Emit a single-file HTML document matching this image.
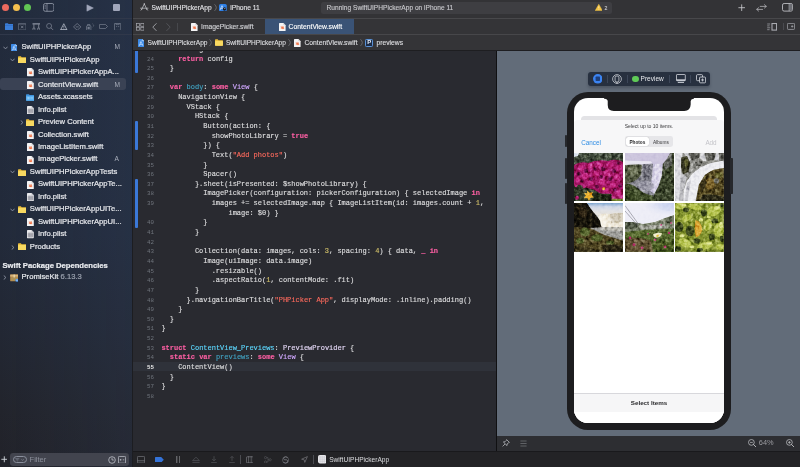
<!DOCTYPE html>
<html><head><meta charset="utf-8"><title>Xcode</title>
<style>
*{box-sizing:border-box;margin:0;padding:0}
html,body{width:800px;height:467px;overflow:hidden;background:#292a30}
body{position:relative;font-family:"Liberation Sans",sans-serif;color:#dfdfe0;-webkit-font-smoothing:antialiased}
.abs{position:absolute}
#root{position:absolute;left:0;top:0;width:800px;height:467px;will-change:transform;overflow:hidden}
#sidebar{position:absolute;left:0;top:0;width:132.4px;height:467px;background:linear-gradient(270deg,rgba(70,100,150,0.11),rgba(70,100,150,0) 100%),linear-gradient(180deg,#222b3c 0%,#222a3a 50%,#222733 72%,#22242c 88%,#212229 100%)}
#sideline{position:absolute;left:132.4px;top:0;width:0.9px;height:467px;background:#1c1d21}
#sidebar .hline{position:absolute;left:0;width:133px;height:1px;background:#30384a}
.tl{position:absolute;top:4px;width:7.2px;height:7.2px;border-radius:50%}
.item{position:absolute;left:0;width:133px;height:12.5px;line-height:12.5px;font-size:7.65px;color:#e4e6ea;white-space:nowrap}
.item .tx{position:absolute;top:0;-webkit-text-stroke:0.22px currentColor}
.item .bd{position:absolute;left:114.5px;top:0;font-size:6.6px;color:#a9aebb}
.item svg{position:absolute}
#sel{position:absolute;left:0;top:78.4px;width:126px;height:12px;border-radius:3px;background:#3a4254}
/* editor chrome */
#toolbar{position:absolute;left:133px;top:0;width:667px;height:18.2px;background:#333336}
#tabbar{position:absolute;left:133px;top:18.2px;width:667px;height:16px;background:#343437;border-top:0.8px solid #48484b}
#jump{z-index:2;position:absolute;left:133px;top:34px;width:667px;height:17.1px;background:#343437;border-top:0.8px solid #47474a;border-bottom:0.7px solid #1e1e21}
#editor{position:absolute;left:133px;top:50px;width:363px;height:401px;background:#292a30;overflow:hidden}
.row{position:relative;height:9.645px;line-height:9.645px;white-space:pre;font-family:"Liberation Mono",monospace;font-size:7px;color:#dfdfe0}
.row.hl{background:none}
#curline{position:absolute;left:0;top:311.9px;width:364px;height:8.9px;background:#2f323a}
.ln{position:absolute;left:0;width:21px;text-align:right;font-size:5.8px;color:#6f747c}
.ln.cur{color:#e6e6e6;font-weight:bold}
.cd{position:absolute;left:28.4px;letter-spacing:-0.01px;-webkit-text-stroke:0.14px currentColor}
.k{color:#fc5fa3;font-weight:bold}
.t{color:#d0a8ff}
.t2{color:#e2d6f4}
.s{color:#fc6a5d}
.n{color:#d0bf69}
.d{color:#41a1c0}
.c{color:#5dd8ff}
.chg{position:absolute;left:2px;width:3px;background:#3b78d8;border-radius:1px}
#canvas{position:absolute;left:497px;top:51px;width:303px;height:385px;background:#626c79}
#cbar{position:absolute;left:497px;top:435.6px;width:303px;height:15.4px;background:#2d2e32}
#dbg{position:absolute;left:133px;top:451px;width:667px;height:16px;background:#232326;border-top:1px solid #19191c}
#split{position:absolute;left:496px;top:50px;width:0.9px;height:401px;background:#101012}
</style></head><body>
<svg width="0" height="0" style="position:absolute"><defs><filter id="pb0" x="0" y="0" width="100%" height="100%"><feGaussianBlur stdDeviation="0.5"/></filter><filter id="pb" x="0" y="0" width="100%" height="100%" color-interpolation-filters="sRGB"><feGaussianBlur in="SourceGraphic" stdDeviation="0.55" result="b"/><feTurbulence type="fractalNoise" baseFrequency="0.32" numOctaves="2" seed="7" result="n"/><feColorMatrix in="n" type="matrix" values="0.5 0.5 0 0 0  0.5 0.5 0 0 0  0.5 0.5 0 0 0  0 0 0 0 1" result="g"/><feComponentTransfer in="g" result="g2"><feFuncR type="linear" slope="2.2" intercept="-0.6"/><feFuncG type="linear" slope="2.2" intercept="-0.6"/><feFuncB type="linear" slope="2.2" intercept="-0.6"/></feComponentTransfer><feBlend in="g2" in2="b" mode="soft-light"/></filter></defs></svg>

<div id="root">
<!-- ================= SIDEBAR ================= -->
<div id="sidebar">
  <div class="tl" style="left:1.8px;background:#ec6a5e"></div>
  <div class="tl" style="left:13px;background:#f4bf4f"></div>
  <div class="tl" style="left:24.3px;background:#61c554"></div>
  <svg class="abs" style="left:42.8px;top:3.3px" width="11.4" height="8.8" viewBox="0 0 11.4 8.8"><rect x="0.5" y="0.5" width="10.4" height="7.8" rx="1.8" fill="none" stroke="#9299a9" stroke-width="0.85"/><path d="M4 0.5 V8.3" stroke="#9299a9" stroke-width="0.75"/><path d="M1.5 2.4 H3 M1.5 3.8 H3 M1.5 5.2 H3" stroke="#9299a9" stroke-width="0.55"/></svg>
<svg class="abs" style="left:86px;top:3.6px" width="8.4" height="8" viewBox="0 0 8.4 8"><path d="M0.9 0.8 L7.4 4 L0.9 7.2 Z" fill="#a0a6ba" stroke="#a0a6ba" stroke-width="0.5" stroke-linejoin="round"/></svg>
<div class="abs" style="left:113.2px;top:4.2px;width:6.9px;height:6.9px;border-radius:1px;background:#a0a6ba"></div>
  <div class="hline" style="top:18px"></div>
  <svg class="abs" style="left:4.6px;top:22.8px" width="8.4" height="7.4" viewBox="0 0 8.4 7.4"><path d="M0 1 Q0 0.2 0.8 0.2 L2.8 0.2 L3.6 1 L7.6 1 Q8.4 1 8.4 1.8 L8.4 6.4 Q8.4 7.2 7.6 7.2 L0.8 7.2 Q0 7.2 0 6.4 Z" fill="#3b7fd9"/><path d="M0 2.4 H8.4" stroke="#2b62b4" stroke-width="0.5"/></svg>
<svg class="abs" style="left:18px;top:22.8px" width="8.4" height="7.4" viewBox="0 0 8.4 7.4"><rect x="0.4" y="0.4" width="7.6" height="6.6" rx="0.6" fill="none" stroke="#6f7787" stroke-width="0.7"/><path d="M0.4 1.4 H8" stroke="#6f7787" stroke-width="0.5"/><path d="M3 2.8 L5.4 5.2 M5.4 2.8 L3 5.2" stroke="#8a91a0" stroke-width="0.7"/></svg>
<svg class="abs" style="left:31.6px;top:22.8px" width="8.6" height="7.6" viewBox="0 0 8.6 7.6"><g fill="none" stroke="#9da4b2" stroke-width="0.7"><path d="M0.5 0.9 H8.1" stroke-width="1.1"/><path d="M1.9 1.4 V5 M6.7 1.4 V5"/><path d="M0.9 5.2 V6.9 M2.9 5.2 V6.9 M5.7 5.2 V6.9 M7.7 5.2 V6.9 M0.9 5.2 H2.9 M5.7 5.2 H7.7" stroke-width="0.6"/></g></svg>
<svg class="abs" style="left:45.8px;top:22.8px" width="8" height="7.6" viewBox="0 0 8 7.6"><circle cx="3.1" cy="3" r="2.5" fill="none" stroke="#7f8797" stroke-width="0.7"/><path d="M5 4.9 L7.4 7.2" stroke="#7f8797" stroke-width="0.8" stroke-linecap="round"/></svg>
<svg class="abs" style="left:59.6px;top:22.5px" width="8" height="7.6" viewBox="0 0 8 7.6"><path d="M3.8 0.7 L7 6.9 L0.6 6.9 Z" fill="none" stroke="#b4bac6" stroke-width="0.8" stroke-linejoin="round"/><path d="M0.6 6.9 H7" stroke="#b4bac6" stroke-width="1"/><path d="M3.8 2.8 V4.6 M3.8 5.3 V5.8" stroke="#b4bac6" stroke-width="0.75"/></svg>
<svg class="abs" style="left:73px;top:22.6px" width="8.4" height="7.8" viewBox="0 0 8.4 7.8"><path d="M4.2 0.5 L7.9 3.9 L4.2 7.3 L0.5 3.9 Z" fill="none" stroke="#7f8797" stroke-width="0.7" stroke-linejoin="round"/><path d="M2.7 3.9 H5.7" stroke="#7f8797" stroke-width="0.7"/></svg>
<svg class="abs" style="left:86px;top:22.6px" width="9.4" height="7.8" viewBox="0 0 9.4 7.8"><g fill="none" stroke="#7f8797" stroke-width="0.65"><rect x="0.5" y="2.8" width="4.4" height="4.5" rx="0.6"/><path d="M1.5 2.8 V1.5 H3.9 V2.8"/><rect x="1.9" y="4.4" width="1.6" height="1.5"/><path d="M6.6 0.8 Q8.6 2.4 6.8 4.2" stroke-dasharray="0.9 0.7"/></g></svg>
<svg class="abs" style="left:99.2px;top:24.0px" width="9" height="5" viewBox="0 0 9 5"><path d="M0.4 0.9 Q0.4 0.4 0.9 0.4 L6.4 0.4 L8.5 2.5 L6.4 4.6 L0.9 4.6 Q0.4 4.6 0.4 4.1 Z" fill="none" stroke="#7f8797" stroke-width="0.7" stroke-linejoin="round"/></svg>
<svg class="abs" style="left:114px;top:22.6px" width="7.2" height="7.8" viewBox="0 0 7.2 7.8"><rect x="0.4" y="0.4" width="6.4" height="7" rx="0.6" fill="none" stroke="#7f8797" stroke-width="0.7"/><path d="M2 0.4 V1.6 H5.2 V0.4 M2 3.6 H3.2 M4 3.6 H5.2" fill="none" stroke="#7f8797" stroke-width="0.6"/></svg>
  <div class="hline" style="top:34px"></div>
  <div id="sel"></div>
  <div class="item" style="top:41.25px"><svg style="left:3px;top:4.25px" width="5" height="4" viewBox="0 0 5 4"><path d="M0.7 1 L2.5 2.9 L4.3 1" fill="none" stroke="#8f96a5" stroke-width="0.9" stroke-linecap="round" stroke-linejoin="round"/></svg><svg style="left:10.8px;top:2.6px" width="6.6" height="7.6" viewBox="0 0 6.6 7.6"><path d="M0.6 0 L4.4 0 L6.6 2.2 L6.6 7 Q6.6 7.6 6 7.6 L0.6 7.6 Q0 7.6 0 7 L0 0.6 Q0 0 0.6 0 Z" fill="#3d8ae6"/><path d="M4.4 0 L4.4 1.7 Q4.4 2.2 4.9 2.2 L6.6 2.2 Z" fill="#b5d6fa"/><path d="M1.4 6.2 L3.2 2.6 L5 6.2 M2 5.2 H4.5 M3.3 1.6 L2.2 3.6" fill="none" stroke="#d7e8fb" stroke-width="0.6" stroke-linecap="round"/></svg><span class="tx" style="left:21.5px">SwiftUIPHPickerApp</span><span class="bd">M</span></div>
<div class="item" style="top:53.72px"><svg style="left:10.2px;top:4.25px" width="5" height="4" viewBox="0 0 5 4"><path d="M0.7 1 L2.5 2.9 L4.3 1" fill="none" stroke="#8f96a5" stroke-width="0.9" stroke-linecap="round" stroke-linejoin="round"/></svg><svg style="left:18px;top:2.6px" width="8.4" height="7.2" viewBox="0 0 8.4 7.2"><path d="M0 1 Q0 0.3 0.7 0.3 L2.8 0.3 L3.7 1.2 L7.7 1.2 Q8.4 1.2 8.4 1.9 L8.4 6.4 Q8.4 7.1 7.7 7.1 L0.7 7.1 Q0 7.1 0 6.4 Z" fill="#e9bd3c"/><path d="M0 2.6 Q0 2 0.7 2 L7.7 2 Q8.4 2 8.4 2.6 L8.4 6.4 Q8.4 7.1 7.7 7.1 L0.7 7.1 Q0 7.1 0 6.4 Z" fill="#f8d961"/></svg><span class="tx" style="left:29.8px">SwiftUIPHPickerApp</span></div>
<div class="item" style="top:66.19px"><svg style="left:26.9px;top:2.2px" width="6.8" height="8.2" viewBox="0 0 6.8 8.2"><path d="M0.6 0 L4.6 0 L6.8 2.2 L6.8 7.6 Q6.8 8.2 6.2 8.2 L0.6 8.2 Q0 8.2 0 7.6 L0 0.6 Q0 0 0.6 0 Z" fill="#f4f4f5"/><path d="M4.6 0 L4.6 1.7 Q4.6 2.2 5.1 2.2 L6.8 2.2 Z" fill="#c9c9cd"/><path d="M1.5 3.3 Q2.8 4.4 3.9 4.6 Q4.3 3.6 3.8 2.7 Q5.5 3.8 5.2 5.5 Q5.6 6.1 5.5 6.7 Q5 6.2 4.5 6.3 Q3.2 6.9 1.3 5.6 Q2.2 5.7 2.8 5.4 Q1.9 4.6 1.5 3.3 Z" fill="#f06a3c" stroke="#f06a3c" stroke-width="0.4" stroke-linejoin="round" transform="translate(3.4 4.7) scale(0.78) translate(-3.4 -4.9)"/></svg><span class="tx" style="left:37.9px">SwiftUIPHPickerAppA...</span></div>
<div class="item" style="top:78.66px"><svg style="left:26.9px;top:2.2px" width="6.8" height="8.2" viewBox="0 0 6.8 8.2"><path d="M0.6 0 L4.6 0 L6.8 2.2 L6.8 7.6 Q6.8 8.2 6.2 8.2 L0.6 8.2 Q0 8.2 0 7.6 L0 0.6 Q0 0 0.6 0 Z" fill="#f4f4f5"/><path d="M4.6 0 L4.6 1.7 Q4.6 2.2 5.1 2.2 L6.8 2.2 Z" fill="#c9c9cd"/><path d="M1.5 3.3 Q2.8 4.4 3.9 4.6 Q4.3 3.6 3.8 2.7 Q5.5 3.8 5.2 5.5 Q5.6 6.1 5.5 6.7 Q5 6.2 4.5 6.3 Q3.2 6.9 1.3 5.6 Q2.2 5.7 2.8 5.4 Q1.9 4.6 1.5 3.3 Z" fill="#f06a3c" stroke="#f06a3c" stroke-width="0.4" stroke-linejoin="round" transform="translate(3.4 4.7) scale(0.78) translate(-3.4 -4.9)"/></svg><span class="tx" style="left:37.9px">ContentView.swift</span><span class="bd">M</span></div>
<div class="item" style="top:91.13px"><svg style="left:25.9px;top:3px" width="8.4" height="6.8" viewBox="0 0 8.4 6.8"><path d="M0 0.9 Q0 0.2 0.7 0.2 L2.8 0.2 L3.7 1.1 L7.7 1.1 Q8.4 1.1 8.4 1.8 L8.4 6 Q8.4 6.7 7.7 6.7 L0.7 6.7 Q0 6.7 0 6 Z" fill="#3f93dc"/><path d="M0 2.4 Q0 1.9 0.7 1.9 L7.7 1.9 Q8.4 1.9 8.4 2.4 L8.4 6 Q8.4 6.7 7.7 6.7 L0.7 6.7 Q0 6.7 0 6 Z" fill="#58aef0"/><rect x="1.4" y="3" width="2.2" height="2.4" fill="#8fcbf6"/><rect x="4.3" y="3.2" width="2.8" height="0.6" fill="#8fcbf6"/><rect x="4.3" y="4.5" width="2.8" height="0.6" fill="#8fcbf6"/></svg><span class="tx" style="left:37.9px">Assets.xcassets</span></div>
<div class="item" style="top:103.60px"><svg style="left:26.9px;top:2.2px" width="6.8" height="8.2" viewBox="0 0 6.8 8.2"><path d="M0.6 0 L4.6 0 L6.8 2.2 L6.8 7.6 Q6.8 8.2 6.2 8.2 L0.6 8.2 Q0 8.2 0 7.6 L0 0.6 Q0 0 0.6 0 Z" fill="#e9e9ec"/><path d="M4.6 0 L4.6 1.7 Q4.6 2.2 5.1 2.2 L6.8 2.2 Z" fill="#b9b9bf"/><path d="M1.2 3.1H5.6V7H1.2Z M2.7 3.1V7 M4.1 3.1V7 M1.2 4.4H5.6 M1.2 5.7H5.6" fill="none" stroke="#85858e" stroke-width="0.6"/></svg><span class="tx" style="left:37.9px">Info.plist</span></div>
<div class="item" style="top:116.07px"><svg style="left:20.1px;top:3.75px" width="4" height="5" viewBox="0 0 4 5"><path d="M1 0.7 L2.9 2.5 L1 4.3" fill="none" stroke="#8f96a5" stroke-width="0.9" stroke-linecap="round" stroke-linejoin="round"/></svg><svg style="left:26.0px;top:2.6px" width="8.4" height="7.2" viewBox="0 0 8.4 7.2"><path d="M0 1 Q0 0.3 0.7 0.3 L2.8 0.3 L3.7 1.2 L7.7 1.2 Q8.4 1.2 8.4 1.9 L8.4 6.4 Q8.4 7.1 7.7 7.1 L0.7 7.1 Q0 7.1 0 6.4 Z" fill="#e9bd3c"/><path d="M0 2.6 Q0 2 0.7 2 L7.7 2 Q8.4 2 8.4 2.6 L8.4 6.4 Q8.4 7.1 7.7 7.1 L0.7 7.1 Q0 7.1 0 6.4 Z" fill="#f8d961"/></svg><span class="tx" style="left:37.9px">Preview Content</span></div>
<div class="item" style="top:128.54px"><svg style="left:26.9px;top:2.2px" width="6.8" height="8.2" viewBox="0 0 6.8 8.2"><path d="M0.6 0 L4.6 0 L6.8 2.2 L6.8 7.6 Q6.8 8.2 6.2 8.2 L0.6 8.2 Q0 8.2 0 7.6 L0 0.6 Q0 0 0.6 0 Z" fill="#f4f4f5"/><path d="M4.6 0 L4.6 1.7 Q4.6 2.2 5.1 2.2 L6.8 2.2 Z" fill="#c9c9cd"/><path d="M1.5 3.3 Q2.8 4.4 3.9 4.6 Q4.3 3.6 3.8 2.7 Q5.5 3.8 5.2 5.5 Q5.6 6.1 5.5 6.7 Q5 6.2 4.5 6.3 Q3.2 6.9 1.3 5.6 Q2.2 5.7 2.8 5.4 Q1.9 4.6 1.5 3.3 Z" fill="#f06a3c" stroke="#f06a3c" stroke-width="0.4" stroke-linejoin="round" transform="translate(3.4 4.7) scale(0.78) translate(-3.4 -4.9)"/></svg><span class="tx" style="left:37.9px">Collection.swift</span></div>
<div class="item" style="top:141.01px"><svg style="left:26.9px;top:2.2px" width="6.8" height="8.2" viewBox="0 0 6.8 8.2"><path d="M0.6 0 L4.6 0 L6.8 2.2 L6.8 7.6 Q6.8 8.2 6.2 8.2 L0.6 8.2 Q0 8.2 0 7.6 L0 0.6 Q0 0 0.6 0 Z" fill="#f4f4f5"/><path d="M4.6 0 L4.6 1.7 Q4.6 2.2 5.1 2.2 L6.8 2.2 Z" fill="#c9c9cd"/><path d="M1.5 3.3 Q2.8 4.4 3.9 4.6 Q4.3 3.6 3.8 2.7 Q5.5 3.8 5.2 5.5 Q5.6 6.1 5.5 6.7 Q5 6.2 4.5 6.3 Q3.2 6.9 1.3 5.6 Q2.2 5.7 2.8 5.4 Q1.9 4.6 1.5 3.3 Z" fill="#f06a3c" stroke="#f06a3c" stroke-width="0.4" stroke-linejoin="round" transform="translate(3.4 4.7) scale(0.78) translate(-3.4 -4.9)"/></svg><span class="tx" style="left:37.9px">ImageListItem.swift</span></div>
<div class="item" style="top:153.48px"><svg style="left:26.9px;top:2.2px" width="6.8" height="8.2" viewBox="0 0 6.8 8.2"><path d="M0.6 0 L4.6 0 L6.8 2.2 L6.8 7.6 Q6.8 8.2 6.2 8.2 L0.6 8.2 Q0 8.2 0 7.6 L0 0.6 Q0 0 0.6 0 Z" fill="#f4f4f5"/><path d="M4.6 0 L4.6 1.7 Q4.6 2.2 5.1 2.2 L6.8 2.2 Z" fill="#c9c9cd"/><path d="M1.5 3.3 Q2.8 4.4 3.9 4.6 Q4.3 3.6 3.8 2.7 Q5.5 3.8 5.2 5.5 Q5.6 6.1 5.5 6.7 Q5 6.2 4.5 6.3 Q3.2 6.9 1.3 5.6 Q2.2 5.7 2.8 5.4 Q1.9 4.6 1.5 3.3 Z" fill="#f06a3c" stroke="#f06a3c" stroke-width="0.4" stroke-linejoin="round" transform="translate(3.4 4.7) scale(0.78) translate(-3.4 -4.9)"/></svg><span class="tx" style="left:37.9px">ImagePicker.swift</span><span class="bd">A</span></div>
<div class="item" style="top:165.95px"><svg style="left:10.2px;top:4.25px" width="5" height="4" viewBox="0 0 5 4"><path d="M0.7 1 L2.5 2.9 L4.3 1" fill="none" stroke="#8f96a5" stroke-width="0.9" stroke-linecap="round" stroke-linejoin="round"/></svg><svg style="left:18px;top:2.6px" width="8.4" height="7.2" viewBox="0 0 8.4 7.2"><path d="M0 1 Q0 0.3 0.7 0.3 L2.8 0.3 L3.7 1.2 L7.7 1.2 Q8.4 1.2 8.4 1.9 L8.4 6.4 Q8.4 7.1 7.7 7.1 L0.7 7.1 Q0 7.1 0 6.4 Z" fill="#e9bd3c"/><path d="M0 2.6 Q0 2 0.7 2 L7.7 2 Q8.4 2 8.4 2.6 L8.4 6.4 Q8.4 7.1 7.7 7.1 L0.7 7.1 Q0 7.1 0 6.4 Z" fill="#f8d961"/></svg><span class="tx" style="left:29.8px">SwiftUIPHPickerAppTests</span></div>
<div class="item" style="top:178.42px"><svg style="left:26.9px;top:2.2px" width="6.8" height="8.2" viewBox="0 0 6.8 8.2"><path d="M0.6 0 L4.6 0 L6.8 2.2 L6.8 7.6 Q6.8 8.2 6.2 8.2 L0.6 8.2 Q0 8.2 0 7.6 L0 0.6 Q0 0 0.6 0 Z" fill="#f4f4f5"/><path d="M4.6 0 L4.6 1.7 Q4.6 2.2 5.1 2.2 L6.8 2.2 Z" fill="#c9c9cd"/><path d="M1.5 3.3 Q2.8 4.4 3.9 4.6 Q4.3 3.6 3.8 2.7 Q5.5 3.8 5.2 5.5 Q5.6 6.1 5.5 6.7 Q5 6.2 4.5 6.3 Q3.2 6.9 1.3 5.6 Q2.2 5.7 2.8 5.4 Q1.9 4.6 1.5 3.3 Z" fill="#f06a3c" stroke="#f06a3c" stroke-width="0.4" stroke-linejoin="round" transform="translate(3.4 4.7) scale(0.78) translate(-3.4 -4.9)"/></svg><span class="tx" style="left:37.9px">SwiftUIPHPickerAppTe...</span></div>
<div class="item" style="top:190.89px"><svg style="left:26.9px;top:2.2px" width="6.8" height="8.2" viewBox="0 0 6.8 8.2"><path d="M0.6 0 L4.6 0 L6.8 2.2 L6.8 7.6 Q6.8 8.2 6.2 8.2 L0.6 8.2 Q0 8.2 0 7.6 L0 0.6 Q0 0 0.6 0 Z" fill="#e9e9ec"/><path d="M4.6 0 L4.6 1.7 Q4.6 2.2 5.1 2.2 L6.8 2.2 Z" fill="#b9b9bf"/><path d="M1.2 3.1H5.6V7H1.2Z M2.7 3.1V7 M4.1 3.1V7 M1.2 4.4H5.6 M1.2 5.7H5.6" fill="none" stroke="#85858e" stroke-width="0.6"/></svg><span class="tx" style="left:37.9px">Info.plist</span></div>
<div class="item" style="top:203.36px"><svg style="left:10.2px;top:4.25px" width="5" height="4" viewBox="0 0 5 4"><path d="M0.7 1 L2.5 2.9 L4.3 1" fill="none" stroke="#8f96a5" stroke-width="0.9" stroke-linecap="round" stroke-linejoin="round"/></svg><svg style="left:18px;top:2.6px" width="8.4" height="7.2" viewBox="0 0 8.4 7.2"><path d="M0 1 Q0 0.3 0.7 0.3 L2.8 0.3 L3.7 1.2 L7.7 1.2 Q8.4 1.2 8.4 1.9 L8.4 6.4 Q8.4 7.1 7.7 7.1 L0.7 7.1 Q0 7.1 0 6.4 Z" fill="#e9bd3c"/><path d="M0 2.6 Q0 2 0.7 2 L7.7 2 Q8.4 2 8.4 2.6 L8.4 6.4 Q8.4 7.1 7.7 7.1 L0.7 7.1 Q0 7.1 0 6.4 Z" fill="#f8d961"/></svg><span class="tx" style="left:29.8px">SwiftUIPHPickerAppUITe...</span></div>
<div class="item" style="top:215.83px"><svg style="left:26.9px;top:2.2px" width="6.8" height="8.2" viewBox="0 0 6.8 8.2"><path d="M0.6 0 L4.6 0 L6.8 2.2 L6.8 7.6 Q6.8 8.2 6.2 8.2 L0.6 8.2 Q0 8.2 0 7.6 L0 0.6 Q0 0 0.6 0 Z" fill="#f4f4f5"/><path d="M4.6 0 L4.6 1.7 Q4.6 2.2 5.1 2.2 L6.8 2.2 Z" fill="#c9c9cd"/><path d="M1.5 3.3 Q2.8 4.4 3.9 4.6 Q4.3 3.6 3.8 2.7 Q5.5 3.8 5.2 5.5 Q5.6 6.1 5.5 6.7 Q5 6.2 4.5 6.3 Q3.2 6.9 1.3 5.6 Q2.2 5.7 2.8 5.4 Q1.9 4.6 1.5 3.3 Z" fill="#f06a3c" stroke="#f06a3c" stroke-width="0.4" stroke-linejoin="round" transform="translate(3.4 4.7) scale(0.78) translate(-3.4 -4.9)"/></svg><span class="tx" style="left:37.9px">SwiftUIPHPickerAppUI...</span></div>
<div class="item" style="top:228.30px"><svg style="left:26.9px;top:2.2px" width="6.8" height="8.2" viewBox="0 0 6.8 8.2"><path d="M0.6 0 L4.6 0 L6.8 2.2 L6.8 7.6 Q6.8 8.2 6.2 8.2 L0.6 8.2 Q0 8.2 0 7.6 L0 0.6 Q0 0 0.6 0 Z" fill="#e9e9ec"/><path d="M4.6 0 L4.6 1.7 Q4.6 2.2 5.1 2.2 L6.8 2.2 Z" fill="#b9b9bf"/><path d="M1.2 3.1H5.6V7H1.2Z M2.7 3.1V7 M4.1 3.1V7 M1.2 4.4H5.6 M1.2 5.7H5.6" fill="none" stroke="#85858e" stroke-width="0.6"/></svg><span class="tx" style="left:37.9px">Info.plist</span></div>
<div class="item" style="top:240.77px"><svg style="left:10.799999999999999px;top:3.75px" width="4" height="5" viewBox="0 0 4 5"><path d="M1 0.7 L2.9 2.5 L1 4.3" fill="none" stroke="#8f96a5" stroke-width="0.9" stroke-linecap="round" stroke-linejoin="round"/></svg><svg style="left:18px;top:2.6px" width="8.4" height="7.2" viewBox="0 0 8.4 7.2"><path d="M0 1 Q0 0.3 0.7 0.3 L2.8 0.3 L3.7 1.2 L7.7 1.2 Q8.4 1.2 8.4 1.9 L8.4 6.4 Q8.4 7.1 7.7 7.1 L0.7 7.1 Q0 7.1 0 6.4 Z" fill="#e9bd3c"/><path d="M0 2.6 Q0 2 0.7 2 L7.7 2 Q8.4 2 8.4 2.6 L8.4 6.4 Q8.4 7.1 7.7 7.1 L0.7 7.1 Q0 7.1 0 6.4 Z" fill="#f8d961"/></svg><span class="tx" style="left:29.8px">Products</span></div>
<div class="item" style="top:259.8px;font-weight:bold;font-size:7.65px;color:#e9ebef"><span class="tx" style="left:2.5px">Swift Package Dependencies</span></div>
<div class="item" style="top:271.4px"><svg style="left:3.4px;top:3.75px" width="4" height="5" viewBox="0 0 4 5"><path d="M1 0.7 L2.9 2.5 L1 4.3" fill="none" stroke="#8f96a5" stroke-width="0.9" stroke-linecap="round" stroke-linejoin="round"/></svg><svg style="left:9.8px;top:2.4px" width="8.6" height="7.8" viewBox="0 0 8.6 7.8"><rect x="0.2" y="0.6" width="8" height="6.6" rx="0.5" fill="#b98a4e"/><rect x="0.2" y="0.6" width="8" height="2" fill="#d9b577"/><rect x="3.5" y="0.6" width="1.4" height="3.2" fill="#e8d6a8"/><rect x="0.9" y="3.4" width="6.6" height="3.2" fill="#a8955a" opacity="0.7"/><circle cx="7" cy="6.2" r="1.5" fill="#3f8ef0"/><path d="M6.3 6.2H7.7M7 5.5V6.9" stroke="#fff" stroke-width="0.4"/></svg><span class="tx" style="left:21.5px">PromiseKit <span style="color:#9aa0ad">6.13.3</span></span></div><svg class="abs" style="left:0.9px;top:456.4px" width="6.6" height="6.6" viewBox="0 0 6 6"><path d="M3 0.3 V5.7 M0.3 3 H5.7" stroke="#d5d8de" stroke-width="0.8"/></svg>
<div class="abs" style="left:10.4px;top:453.4px;width:118.6px;height:12.2px;border-radius:3.2px;background:#42444e"></div>
<div class="abs" style="left:13.2px;top:456px;width:13.6px;height:7px;border-radius:3.5px;border:0.7px solid #8a8f9c"></div>
<svg class="abs" style="left:15.2px;top:457.6px" width="10" height="4" viewBox="0 0 10 4"><path d="M0.3 0.6 H4.3 M1.1 1.8 H3.5 M1.9 3 H2.7" stroke="#8a8f9c" stroke-width="0.55"/><path d="M6.4 1.2 L7.6 2.5 L8.8 1.2" fill="none" stroke="#8a8f9c" stroke-width="0.6"/></svg>
<span class="abs" style="left:29.6px;top:454px;height:11px;line-height:11px;font-size:7.5px;color:#8c909b">Filter</span>
<svg class="abs" style="left:108px;top:455.6px" width="8" height="8" viewBox="0 0 8 8"><circle cx="4" cy="4" r="3.3" fill="none" stroke="#c9ccd4" stroke-width="0.75"/><path d="M4 1.8 V4 H5.8" fill="none" stroke="#c9ccd4" stroke-width="0.7"/></svg>
<svg class="abs" style="left:118.2px;top:455.8px" width="8" height="7.6" viewBox="0 0 8 7.6"><rect x="0.4" y="0.4" width="7.2" height="6.8" rx="1" fill="none" stroke="#c9ccd4" stroke-width="0.75"/><path d="M1.8 3.8 H3.4 M2.6 3 V4.6 M4.8 3.8 H6.2" stroke="#c9ccd4" stroke-width="0.65"/></svg>
</div>

<div id="sideline"></div>
<!-- ================= TOP CHROME ================= -->
<div id="toolbar"><svg class="abs" style="left:7.199999999999989px;top:3.4px" width="8.6" height="8" viewBox="0 0 8.6 8"><g fill="none" stroke="#c9cacf" stroke-width="0.7" stroke-linecap="round"><path d="M4.3 1 L1.6 6.6"/><path d="M4.3 1 L7 6.6"/><path d="M0.6 5.2 H8"/><circle cx="4.3" cy="0.9" r="0.55" fill="#c9cacf" stroke="none"/><path d="M1 7.2 L1.9 6.2 M7.6 7.2 L6.7 6.2"/></g></svg>
<span class="abs" style="left:18.599999999999994px;top:2.7px;height:10px;line-height:10px;font-size:6.58px;color:#e3e3e6;white-space:nowrap;-webkit-text-stroke:0.12px currentColor;">SwiftUIPHPickerApp</span>
<svg class="abs" style="left:80.6px;top:4.1px" width="3" height="7.2" viewBox="0 0 3 7.2"><path d="M0.5 0.3 Q2.2 1.9 2.3 3.6 Q2.2 5.3 0.5 6.9" fill="none" stroke="#8a8b90" stroke-width="0.6"/></svg>
<svg class="abs" style="left:86.30000000000001px;top:3.9px" width="7.8" height="7.4" viewBox="0 0 7.8 7.4"><rect x="0" y="0" width="7.8" height="7.4" rx="1.6" fill="#2f80e6"/><path d="M1.2 5.8 L3 1.6 L4.4 4.6 M1.8 4.4 H4" stroke="#d5e5fb" stroke-width="0.7" fill="none" stroke-linecap="round"/><circle cx="5.5" cy="5" r="1.7" fill="#141a24"/><circle cx="5.9" cy="4.5" r="0.5" fill="#c9d3e0"/></svg>
<span class="abs" style="left:97.19999999999999px;top:2.7px;height:10px;line-height:10px;font-size:6.7px;color:#e3e3e6;white-space:nowrap;-webkit-text-stroke:0.12px currentColor;">iPhone 11</span>
<div class="abs" style="left:187.5px;top:1.6px;width:291px;height:12.2px;border-radius:2.5px;background:#3e3e42"></div>
<span class="abs" style="left:193.60000000000002px;top:2.7px;height:10px;line-height:10px;font-size:6.6px;color:#c9c9cd;white-space:nowrap;-webkit-text-stroke:0.12px currentColor;">Running SwiftUIPHPickerApp on iPhone 11</span>
<svg class="abs" style="left:461.6px;top:3.8px" width="7.6" height="7" viewBox="0 0 7.6 7"><path d="M3.8 0.3 L7.4 6.6 L0.2 6.6 Z" fill="#f3c343" stroke="#f3c343" stroke-width="0.5" stroke-linejoin="round"/><path d="M3.8 2.3 V4.4 M3.8 5.2 V5.7" stroke="#fdf4d6" stroke-width="0.7"/></svg>
<span class="abs" style="left:471.6px;top:2.8px;height:10px;line-height:10px;font-size:5.2px;color:#c9c9cd;white-space:nowrap;-webkit-text-stroke:0.12px currentColor;">2</span>
<svg class="abs" style="left:604.5px;top:4px" width="7.4" height="7.4" viewBox="0 0 7.4 7.4"><path d="M3.7 0.4 V7 M0.4 3.7 H7" stroke="#cfd0d4" stroke-width="0.8" fill="none"/></svg>
<svg class="abs" style="left:622.6px;top:3.6px" width="11" height="8" viewBox="0 0 11 8"><g fill="none" stroke="#b9babf" stroke-width="0.75" stroke-linecap="round" stroke-linejoin="round"><path d="M4.2 2.4 H10.2 M8.4 0.7 L10.3 2.4 L8.4 4.1"/><path d="M6.6 5.4 H0.8 M2.6 3.7 L0.7 5.4 L2.6 7.1"/></g></svg>
<svg class="abs" style="left:649.4px;top:3.2px" width="11" height="8.6" viewBox="0 0 11 8.6"><rect x="0.5" y="0.5" width="10" height="7.6" rx="1.6" fill="none" stroke="#c4c5ca" stroke-width="0.85"/><path d="M7.2 0.5 V8.1" stroke="#c4c5ca" stroke-width="0.8"/><rect x="7.6" y="1" width="2.6" height="6.6" fill="#6c6d73"/></svg></div>
<div id="tabbar"><svg class="abs" style="left:3px;top:3.8999999999999986px" width="8.4" height="7.6" viewBox="0 0 8.4 7.6"><g fill="none" stroke="#a9aab0" stroke-width="0.7"><rect x="0.4" y="0.4" width="3.2" height="2.9"/><rect x="4.8" y="0.4" width="3.2" height="2.9"/><rect x="0.4" y="4.3" width="3.2" height="2.9"/><rect x="4.8" y="4.3" width="3.2" height="2.9"/></g></svg>
<svg class="abs" style="left:19.400000000000006px;top:3.6000000000000014px" width="5" height="8.2" viewBox="0 0 5 8.2"><path d="M4.2 0.6 L0.8 4.1 L4.2 7.6" fill="none" stroke="#b4b5ba" stroke-width="0.8" stroke-linecap="round" stroke-linejoin="round"/></svg>
<svg class="abs" style="left:32.80000000000001px;top:3.6000000000000014px" width="5" height="8.2" viewBox="0 0 5 8.2"><path d="M0.8 0.6 L4.2 4.1 L0.8 7.6" fill="none" stroke="#5d5e63" stroke-width="0.8" stroke-linecap="round" stroke-linejoin="round"/></svg>
<div class="abs" style="left:44.400000000000006px;top:3.5px;width:0.7px;height:8px;background:#47484c"></div>
<svg class="abs" style="left:58.30000000000001px;top:3.5px" width="6.6" height="8" viewBox="0 0 6.8 8.2"><path d="M0.6 0 L4.6 0 L6.8 2.2 L6.8 7.6 Q6.8 8.2 6.2 8.2 L0.6 8.2 Q0 8.2 0 7.6 L0 0.6 Q0 0 0.6 0 Z" fill="#f4f4f5"/><path d="M4.6 0 L4.6 1.7 Q4.6 2.2 5.1 2.2 L6.8 2.2 Z" fill="#c9c9cd"/><path d="M1.5 3.3 Q2.8 4.4 3.9 4.6 Q4.3 3.6 3.8 2.7 Q5.5 3.8 5.2 5.5 Q5.6 6.1 5.5 6.7 Q5 6.2 4.5 6.3 Q3.2 6.9 1.3 5.6 Q2.2 5.7 2.8 5.4 Q1.9 4.6 1.5 3.3 Z" fill="#f06a3c" stroke="#f06a3c" stroke-width="0.4" stroke-linejoin="round" transform="translate(3.4 4.7) scale(0.78) translate(-3.4 -4.9)"/></svg>
<span class="abs" style="left:68px;top:2.6999999999999993px;height:10px;line-height:10px;font-size:6.75px;color:#d4d5d9;white-space:nowrap;-webkit-text-stroke:0.12px currentColor;">ImagePicker.swift</span>
<div class="abs" style="left:132px;top:0px;width:88.6px;height:15px;background:#3a5376"></div>
<svg class="abs" style="left:146px;top:3.3999999999999986px" width="6.6" height="8" viewBox="0 0 6.8 8.2"><path d="M0.6 0 L4.6 0 L6.8 2.2 L6.8 7.6 Q6.8 8.2 6.2 8.2 L0.6 8.2 Q0 8.2 0 7.6 L0 0.6 Q0 0 0.6 0 Z" fill="#f4f4f5"/><path d="M4.6 0 L4.6 1.7 Q4.6 2.2 5.1 2.2 L6.8 2.2 Z" fill="#c9c9cd"/><path d="M1.5 3.3 Q2.8 4.4 3.9 4.6 Q4.3 3.6 3.8 2.7 Q5.5 3.8 5.2 5.5 Q5.6 6.1 5.5 6.7 Q5 6.2 4.5 6.3 Q3.2 6.9 1.3 5.6 Q2.2 5.7 2.8 5.4 Q1.9 4.6 1.5 3.3 Z" fill="#f06a3c" stroke="#f06a3c" stroke-width="0.4" stroke-linejoin="round" transform="translate(3.4 4.7) scale(0.78) translate(-3.4 -4.9)"/></svg>
<span class="abs" style="left:155.60000000000002px;top:2.6999999999999993px;height:10px;line-height:10px;font-size:6.8px;color:#ffffff;white-space:nowrap;-webkit-text-stroke:0.12px currentColor;">ContentView.swift</span>
<svg class="abs" style="left:634px;top:3.8000000000000007px" width="10.4" height="7.6" viewBox="0 0 10.4 7.6"><g fill="none" stroke="#a9aab0" stroke-width="0.7"><path d="M0.2 1 H3.2 M0.2 2.9 H2.6 M0.2 4.8 H3.2 M0.2 6.7 H2.6"/><rect x="5" y="0.5" width="4.6" height="6.6" stroke-width="1.1"/></g></svg>
<div class="abs" style="left:649.6px;top:4px;width:0.7px;height:7px;background:#4a4b50"></div>
<svg class="abs" style="left:654.4px;top:4.199999999999999px" width="8" height="6.8" viewBox="0 0 8 6.8"><rect x="0.4" y="0.4" width="7.2" height="6" rx="0.8" fill="none" stroke="#a9aab0" stroke-width="0.75"/><path d="M4 3.4 H6.4 M5.2 2.2 V4.6" stroke="#a9aab0" stroke-width="0.7"/></svg></div>
<div id="jump"><svg class="abs" style="left:4.800000000000011px;top:3.8000000000000043px" width="6.4" height="8.2" viewBox="0 0 6.6 8.4"><path d="M0.6 0 L4.4 0 L6.6 2.2 L6.6 7.8 Q6.6 8.4 6 8.4 L0.6 8.4 Q0 8.4 0 7.8 L0 0.6 Q0 0 0.6 0 Z" fill="#3d8ae6"/><path d="M4.4 0 L4.4 1.7 Q4.4 2.2 4.9 2.2 L6.6 2.2 Z" fill="#b5d6fa"/><path d="M1.4 6.8 L3.2 3 L5 6.8 M2 5.7 H4.5 M3.3 2 L2.2 4" fill="none" stroke="#d7e8fb" stroke-width="0.6" stroke-linecap="round"/></svg>
<span class="abs" style="left:14.5px;top:2.8000000000000043px;height:10px;line-height:10px;font-size:6.58px;color:#dedfe2;white-space:nowrap;-webkit-text-stroke:0.12px currentColor;">SwiftUIPHPickerApp</span>
<svg class="abs" style="left:76.4px;top:4.4px" width="3" height="7.2" viewBox="0 0 3 7.2"><path d="M0.5 0.3 Q2.2 1.9 2.3 3.6 Q2.2 5.3 0.5 6.9" fill="none" stroke="#8a8b90" stroke-width="0.6"/></svg>
<svg class="abs" style="left:82px;top:4.400000000000006px" width="8" height="6.9" viewBox="0 0 8.4 7.2"><path d="M0 1 Q0 0.3 0.7 0.3 L2.8 0.3 L3.7 1.2 L7.7 1.2 Q8.4 1.2 8.4 1.9 L8.4 6.4 Q8.4 7.1 7.7 7.1 L0.7 7.1 Q0 7.1 0 6.4 Z" fill="#e9bd3c"/><path d="M0 2.6 Q0 2 0.7 2 L7.7 2 Q8.4 2 8.4 2.6 L8.4 6.4 Q8.4 7.1 7.7 7.1 L0.7 7.1 Q0 7.1 0 6.4 Z" fill="#f8d961"/></svg>
<span class="abs" style="left:92.9px;top:2.8000000000000043px;height:10px;line-height:10px;font-size:6.58px;color:#dedfe2;white-space:nowrap;-webkit-text-stroke:0.12px currentColor;">SwiftUIPHPickerApp</span>
<svg class="abs" style="left:155.2px;top:4.4px" width="3" height="7.2" viewBox="0 0 3 7.2"><path d="M0.5 0.3 Q2.2 1.9 2.3 3.6 Q2.2 5.3 0.5 6.9" fill="none" stroke="#8a8b90" stroke-width="0.6"/></svg>
<svg class="abs" style="left:161px;top:3.9000000000000057px" width="6.6" height="8" viewBox="0 0 6.8 8.2"><path d="M0.6 0 L4.6 0 L6.8 2.2 L6.8 7.6 Q6.8 8.2 6.2 8.2 L0.6 8.2 Q0 8.2 0 7.6 L0 0.6 Q0 0 0.6 0 Z" fill="#f4f4f5"/><path d="M4.6 0 L4.6 1.7 Q4.6 2.2 5.1 2.2 L6.8 2.2 Z" fill="#c9c9cd"/><path d="M1.5 3.3 Q2.8 4.4 3.9 4.6 Q4.3 3.6 3.8 2.7 Q5.5 3.8 5.2 5.5 Q5.6 6.1 5.5 6.7 Q5 6.2 4.5 6.3 Q3.2 6.9 1.3 5.6 Q2.2 5.7 2.8 5.4 Q1.9 4.6 1.5 3.3 Z" fill="#f06a3c" stroke="#f06a3c" stroke-width="0.4" stroke-linejoin="round" transform="translate(3.4 4.7) scale(0.78) translate(-3.4 -4.9)"/></svg>
<span class="abs" style="left:171.39999999999998px;top:2.8000000000000043px;height:10px;line-height:10px;font-size:6.75px;color:#dedfe2;white-space:nowrap;-webkit-text-stroke:0.12px currentColor;">ContentView.swift</span>
<svg class="abs" style="left:227px;top:4.4px" width="3" height="7.2" viewBox="0 0 3 7.2"><path d="M0.5 0.3 Q2.2 1.9 2.3 3.6 Q2.2 5.3 0.5 6.9" fill="none" stroke="#8a8b90" stroke-width="0.6"/></svg>
<div class="abs" style="left:232.39999999999998px;top:4.200000000000003px;width:7.6px;height:7.4px;border-radius:1.3px;background:#1c2c48;border:0.8px solid #5b93d8"></div>
<span class="abs" style="left:232.39999999999998px;top:4.200000000000003px;width:7.6px;height:7.4px;line-height:7.6px;text-align:center;font-size:6px;font-weight:bold;color:#e8f0fb">P</span>
<span class="abs" style="left:243.39999999999998px;top:2.8000000000000043px;height:10px;line-height:10px;font-size:6.75px;color:#dedfe2;white-space:nowrap;-webkit-text-stroke:0.12px currentColor;">previews</span></div>

<!-- ================= EDITOR ================= -->
<div id="editor">
<div id="curline"></div>
<div class="chg" style="top:0;height:22.6px;border-top-left-radius:0;border-top-right-radius:0"></div>
<div class="chg" style="top:71px;height:29px"></div>
<div class="chg" style="top:129.3px;height:48.3px"></div>
<div style="position:absolute;left:0;top:-5.15px;width:364px">
<div class="row"><span class="ln">23</span><span class="cd">    config.selectionLimit = <span class="n">10</span></span></div>
<div class="row"><span class="ln">24</span><span class="cd">    <span class="k">return</span> config</span></div>
<div class="row"><span class="ln">25</span><span class="cd">  }</span></div>
<div class="row"><span class="ln">26</span><span class="cd"></span></div>
<div class="row"><span class="ln">27</span><span class="cd">  <span class="k">var</span> <span class="d">body</span>: <span class="k">some</span> <span class="t">View</span> {</span></div>
<div class="row"><span class="ln">28</span><span class="cd">    NavigationView {</span></div>
<div class="row"><span class="ln">29</span><span class="cd">      VStack {</span></div>
<div class="row"><span class="ln">30</span><span class="cd">        HStack {</span></div>
<div class="row"><span class="ln">31</span><span class="cd">          Button(action: {</span></div>
<div class="row"><span class="ln">32</span><span class="cd">            showPhotoLibrary = <span class="k">true</span></span></div>
<div class="row"><span class="ln">33</span><span class="cd">          }) {</span></div>
<div class="row"><span class="ln">34</span><span class="cd">            Text(<span class="s">"Add photos"</span>)</span></div>
<div class="row"><span class="ln">35</span><span class="cd">          }</span></div>
<div class="row"><span class="ln">36</span><span class="cd">          Spacer()</span></div>
<div class="row"><span class="ln">37</span><span class="cd">        }.sheet(isPresented: $showPhotoLibrary) {</span></div>
<div class="row"><span class="ln">38</span><span class="cd">          ImagePicker(configuration: pickerConfiguration) { selectedImage <span class="k">in</span></span></div>
<div class="row"><span class="ln">39</span><span class="cd">            images += selectedImage.map { ImageListItem(id: images.count + <span class="n">1</span>,</span></div>
<div class="row"><span class="ln"></span><span class="cd">                image: $0) }</span></div>
<div class="row"><span class="ln">40</span><span class="cd">          }</span></div>
<div class="row"><span class="ln">41</span><span class="cd">        }</span></div>
<div class="row"><span class="ln">42</span><span class="cd"></span></div>
<div class="row"><span class="ln">43</span><span class="cd">        Collection(data: images, cols: <span class="n">3</span>, spacing: <span class="n">4</span>) { data, <span class="k">_</span> <span class="k">in</span></span></div>
<div class="row"><span class="ln">44</span><span class="cd">          Image(uiImage: data.image)</span></div>
<div class="row"><span class="ln">45</span><span class="cd">            .resizable()</span></div>
<div class="row"><span class="ln">46</span><span class="cd">            .aspectRatio(<span class="n">1</span>, contentMode: .fit)</span></div>
<div class="row"><span class="ln">47</span><span class="cd">        }</span></div>
<div class="row"><span class="ln">48</span><span class="cd">      }.navigationBarTitle(<span class="s">"PHPicker App"</span>, displayMode: .inline).padding()</span></div>
<div class="row"><span class="ln">49</span><span class="cd">    }</span></div>
<div class="row"><span class="ln">50</span><span class="cd">  }</span></div>
<div class="row"><span class="ln">51</span><span class="cd">}</span></div>
<div class="row"><span class="ln">52</span><span class="cd"></span></div>
<div class="row"><span class="ln">53</span><span class="cd"><span class="k">struct</span> <span class="c">ContentView_Previews</span>: <span class="t2">PreviewProvider</span> {</span></div>
<div class="row"><span class="ln">54</span><span class="cd">  <span class="k">static</span> <span class="k">var</span> <span class="d">previews</span>: <span class="k">some</span> <span class="t">View</span> {</span></div>
<div class="row hl"><span class="ln cur">55</span><span class="cd">    ContentView()</span></div>
<div class="row"><span class="ln">56</span><span class="cd">  }</span></div>
<div class="row"><span class="ln">57</span><span class="cd">}</span></div>
<div class="row"><span class="ln">58</span><span class="cd"></span></div>
</div>
</div>
<div id="split"></div>

<!-- ================= CANVAS ================= -->
<div id="canvas"><div class="abs" style="left:90.70000000000005px;top:20.700000000000003px;width:122.8px;height:14.2px;border-radius:3px;background:#27303f;box-shadow:0 1.2px 3px rgba(20,25,35,0.28)"></div>
<svg class="abs" style="left:95.5px;top:23.200000000000003px" width="9.6" height="9.6" viewBox="0 0 9.6 9.6"><circle cx="4.8" cy="4.8" r="4.8" fill="#3c84f2"/><rect x="2.6" y="2.6" width="4.4" height="4.4" rx="0.7" fill="#1d3f7c"/></svg>
<div class="abs" style="left:109.60000000000002px;top:24px;width:0.6px;height:8px;background:#3d4759"></div>
<div class="abs" style="left:130px;top:24px;width:0.6px;height:8px;background:#3d4759"></div>
<div class="abs" style="left:172.39999999999998px;top:24px;width:0.6px;height:8px;background:#3d4759"></div>
<div class="abs" style="left:193.39999999999998px;top:24px;width:0.6px;height:8px;background:#3d4759"></div>
<svg class="abs" style="left:115.39999999999998px;top:23px" width="10" height="10" viewBox="0 0 10 10"><g fill="none" stroke="#dfe2e8" stroke-width="0.7"><circle cx="5" cy="5" r="4.4"/><rect x="3.1" y="2.1" width="3.8" height="5.8" rx="1"/><path d="M4 8.9 H6"/></g></svg>
<div class="abs" style="left:134.89999999999998px;top:24.700000000000003px;width:6.8px;height:6.8px;border-radius:50%;background:#5fca57"></div>
<span class="abs" style="left:143.60000000000002px;top:23px;height:10px;line-height:10px;font-size:6.5px;color:#e8eaee">Preview</span>
<svg class="abs" style="left:178.79999999999995px;top:23.400000000000006px" width="9.8" height="9" viewBox="0 0 9.8 9"><rect x="0.5" y="0.5" width="8.8" height="6.2" rx="0.6" fill="none" stroke="#dfe2e8" stroke-width="0.75"/><rect x="0.5" y="5.4" width="8.8" height="1.3" fill="#dfe2e8"/><path d="M1.8 8.4 H8" stroke="#dfe2e8" stroke-width="0.9"/></svg>
<svg class="abs" style="left:199.20000000000005px;top:23.400000000000006px" width="10.2" height="9.4" viewBox="0 0 9.8 8.8"><g fill="none" stroke="#dfe2e8" stroke-width="0.75"><rect x="0.5" y="0.5" width="5.8" height="5.8" rx="0.9"/><rect x="3.4" y="2.8" width="5.8" height="5.6" rx="0.9" fill="#27303f"/><path d="M6.3 4.2 V7 M4.9 5.6 H7.7"/></g></svg>
<div class="abs" style="left:70px;top:41px;width:164px;height:338.4px;border-radius:21px;background:#1d1d1f"></div>
<div class="abs" style="left:68.10000000000002px;top:84px;width:2.3px;height:11.8px;border-radius:0.8px;background:#26282c"></div>
<div class="abs" style="left:68.10000000000002px;top:107px;width:2.3px;height:21px;border-radius:0.8px;background:#26282c"></div>
<div class="abs" style="left:68.10000000000002px;top:132.2px;width:2.3px;height:20.4px;border-radius:0.8px;background:#26282c"></div>
<div class="abs" style="left:233.39999999999998px;top:107px;width:2.3px;height:36px;border-radius:0.8px;background:#26282c"></div>
<div class="abs" id="screen" style="left:77px;top:47.3px;width:150px;height:325.1px;border-radius:14px;background:#ffffff;overflow:hidden">
<div class="abs" style="left:7px;top:18.10000000000001px;width:136px;height:8px;border-radius:3.5px 3.5px 0 0;background:#e3e3e6"></div>
<div class="abs" style="left:0;top:21.900000000000006px;width:150px;height:320px;border-radius:3.5px 3.5px 0 0;background:#ffffff"></div>
<div class="abs" style="left:0;top:21.900000000000006px;width:150px;height:32.6px;border-radius:3.5px 3.5px 0 0;background:#f7f7f8"></div>
<div class="abs" style="left:0;top:22.700000000000003px;width:150px;height:10px;line-height:10px;text-align:center;font-size:5.05px;color:#3a3a3c">Select up to 10 items.</div>
<span class="abs" style="left:7.2999999999999545px;top:39.89999999999999px;height:10px;line-height:10px;font-size:6.3px;color:#2f8de4">Cancel</span>
<span class="abs" style="left:131.39999999999998px;top:39.89999999999999px;height:10px;line-height:10px;font-size:6.3px;color:#c3c3c8">Add</span>
<div class="abs" style="left:51.39999999999998px;top:38.000000000000014px;width:47.6px;height:10.8px;border-radius:2.4px;background:#e6e6e9"></div>
<div class="abs" style="left:52.10000000000002px;top:38.7px;width:22.6px;height:9.4px;border-radius:2px;background:#fff;box-shadow:0 0 0.8px rgba(0,0,0,.35)"></div>
<div class="abs" style="left:52.10000000000002px;top:39.5px;width:22.6px;height:9.4px;line-height:9.6px;text-align:center;font-size:4.7px;font-weight:bold;color:#2a2a2c">Photos</div>
<div class="abs" style="left:75.60000000000002px;top:39.5px;width:22.6px;height:9.4px;line-height:9.6px;text-align:center;font-size:4.75px;color:#3a3a3c">Albums</div>
<svg class="abs" style="left:0.1px;top:54.3px" width="49.1" height="48.8" viewBox="0 0 49 49" preserveAspectRatio="none"><g filter="url(#pb)"><rect width="49" height="49" fill="#2f3a26"/>
<rect width="49" height="11" fill="#3b4536"/>
<g fill="#55604a"><circle cx="12" cy="3" r="2"/><circle cx="24" cy="5" r="2.4"/><circle cx="36" cy="3" r="2"/><circle cx="44" cy="6" r="1.8"/></g>
<path d="M0 0 H5 L4 3 L0 4 Z" fill="#dfe6f0"/>
<path d="M0 12 Q6 8 14 10 Q24 6 34 8 Q42 5 49 9 V47 L40 46 L37 41 L30 42 L25 40 L20 37 L12 35 L6 32 L0 33 Z" fill="#a21462"/>
<g fill="#c62a86"><circle cx="7" cy="15" r="3"/><circle cx="16" cy="13" r="2.8"/><circle cx="26" cy="12" r="3"/><circle cx="36" cy="12" r="3"/><circle cx="45" cy="15" r="2.6"/><circle cx="11" cy="23" r="3.2"/><circle cx="22" cy="21" r="3"/><circle cx="33" cy="20" r="3.2"/><circle cx="43" cy="24" r="3"/><circle cx="17" cy="30" r="2.8"/><circle cx="28" cy="29" r="3.2"/><circle cx="39" cy="32" r="3"/><circle cx="4" cy="27" r="2.4"/><circle cx="33" cy="38" r="2.6"/><circle cx="45" cy="40" r="2.8"/></g>
<g fill="#5e0c3a"><circle cx="12" cy="18" r="2.1"/><circle cx="29" cy="16" r="2.2"/><circle cx="40" cy="18" r="2"/><circle cx="17" cy="26" r="2"/><circle cx="5" cy="21" r="1.9"/><circle cx="36" cy="26" r="2.1"/><circle cx="23" cy="34" r="2"/><circle cx="46" cy="33" r="1.9"/><circle cx="21" cy="16" r="1.6"/><circle cx="44" cy="10" r="1.6"/><circle cx="27" cy="24" r="1.8"/><circle cx="8" cy="28" r="1.6"/><circle cx="41" cy="37" r="1.8"/></g>
<g fill="#c02a84"><circle cx="2" cy="33" r="1.4"/><circle cx="10" cy="34" r="1.5"/><circle cx="3" cy="45" r="2"/><circle cx="38" cy="45" r="2.4"/><circle cx="47" cy="44" r="2.2"/></g>
<path d="M21 41 H37 L38 49 H19 Z" fill="#1c2412"/>
<path d="M38 46 H49 V49 H37 Z" fill="#7f9038"/>
<path d="M13 37.6 l2.6 2.4 l3.2 -0.8 l-1 3 l2 2.6 l-3.2 0.2 l-1.6 3 l-1.8 -2.8 l-3.4 0.2 l2 -2.8 l-1.8 -2.8 l3.2 0.6 Z" fill="#eab02a"/>
<circle cx="29.6" cy="36" r="1.5" fill="#e8b830"/></g><g filter="url(#pb0)" opacity="0.8"></g></svg>
<svg class="abs" style="left:50.6px;top:54.3px" width="49.1" height="48.8" viewBox="0 0 49 49" preserveAspectRatio="none"><g filter="url(#pb)"><rect width="49" height="49" fill="#85858f"/>
<path d="M0 0 H45 L42 6 L37 11 L0 10 Z" fill="#cdc6de"/>
<path d="M0 7.6 L26 8.4 L27.4 10.4 L0 12.4 Z" fill="#e8e6f0"/>
<path d="M17 12 L27.4 10.4 L27 24 L25 38 L14 33 L16 22 Z" fill="#7a7a84"/>
<path d="M0 12 Q9 9.6 17 12 L16 22 Q10 30 0 31 Z" fill="#50563e"/>
<path d="M3 14 Q9 12.6 14 15 L13 21 Q8 24 3 21 Z" fill="#6c7256"/>
<path d="M28 10 L37.6 9.4 L36.4 28 L33 35 L29.4 41 L24.6 38 L27 24 Z" fill="#d2cde2"/>
<path d="M30 11 L35.6 11 L34.6 28 L30 33 Z" fill="#e0dcec"/>
<ellipse cx="21" cy="33" rx="8" ry="5.4" fill="#a4a2b0" opacity=".8"/>
<path d="M45 0 H49 V49 H27 L29.4 41 L33.6 33 L37 22 L38 11 L42 5 Z" fill="#3a442a"/>
<path d="M38.6 10 L43 4.4 L45 0 H47 V12 L40 17 Z" fill="#62655e"/>
<path d="M0 31 Q7 30.4 13 36 Q19 41.6 28 42.6 L30 49 H0 Z" fill="#3f4c28"/>
<path d="M0 39 Q8 38 12 44 L12 49 H0 Z" fill="#35421f"/></g><g filter="url(#pb0)" opacity="0.8"><path d="M0 0 H45 L42 6 L37 11 L0 10 Z" fill="#cdc6de"/><path d="M0 7.6 L26 8.4 L27.4 10.4 L0 12.4 Z" fill="#e8e6f0"/></g></svg>
<svg class="abs" style="left:101.1px;top:54.3px" width="48.8" height="48.8" viewBox="0 0 49 49" preserveAspectRatio="none"><g filter="url(#pb)"><rect width="49" height="49" fill="#94948f"/>
<g fill="#55554f"><path d="M14 0 H25 L24 5 L17 7 Z"/><path d="M30 0 H41 L39 7 L32 8 Z"/><path d="M44 0 H49 V9 L45 8 Z"/><path d="M20 9 L28 8 L26 13 L21 13 Z"/></g>
<g fill="#d4d4d8"><path d="M26 0 H29.4 L31.4 8 L28.6 8 L24.6 5 Z"/><path d="M41.4 0 H43.6 L44.6 8 L39.6 7 Z"/><path d="M9 0 H13 L16 7 L14 8 Z"/></g>
<path d="M0 0 H7.4 L6 20 L9 49 H0 Z" fill="#dedee2"/>
<path d="M6 20 L12 24 L8.6 38 L9 49 H4 Z" fill="#bcbcc0"/>
<path d="M6.4 4.4 L12 3 L15.4 10 L13.4 19 L8 21.4 L6 14 Z" fill="#33331e"/>
<path d="M9 7 L12.4 6 L13.6 12 L10.4 15 Z" fill="#565628"/>
<path d="M49 7.6 V15 L38 17 L30 22 L24 32 L20.4 49 H8.6 L8.6 38 L12 28 L18 20 L26 14 L36 10 Z" fill="#ececf0"/>
<path d="M12 30 L16 27 L12.6 49 H9.4 Z" fill="#c6c6cc"/>
<path d="M49 15 L38 17 L30 22 L24 32 L21 49 H49 Z" fill="#52461e"/>
<ellipse cx="35" cy="31" rx="5" ry="6" fill="#7a6228"/>
<ellipse cx="44" cy="22" rx="4" ry="3" fill="#6c6830"/>
<circle cx="41.6" cy="28" r="2.6" fill="#77776e"/>
<path d="M28 42 Q38 40 49 44 V49 H24 Z" fill="#2c2a18"/>
<path d="M25 32 L29 24 L32 30 L27 40 Z" fill="#3a3218"/></g><g filter="url(#pb0)" opacity="0.8"></g></svg>
<svg class="abs" style="left:0.1px;top:104.7px" width="49.1" height="48.8" viewBox="0 0 49 49" preserveAspectRatio="none"><g filter="url(#pb)"><defs><linearGradient id="sky4" x1="0" y1="0" x2="0" y2="1"><stop offset="0" stop-color="#7ca4ce"/><stop offset=".3" stop-color="#d9deea"/><stop offset="1" stop-color="#ece6da"/></linearGradient></defs>
<rect width="49" height="49" fill="#9c9c98"/>
<rect width="49" height="24.4" fill="url(#sky4)"/>
<path d="M24 12.4 Q30 9 36 11 Q42 9 49 10 V24.4 H25 Z" fill="#eee8da"/>
<path d="M36 11 Q42 9 49 10 V19 L37 20 Z" fill="#d2cab8"/>
<path d="M25.4 13 L32 12 L32.4 24.4 H27 Z" fill="#f6f2e8"/>
<path d="M16 24.4 H49 V37 L30 33 Z" fill="#9e9e9a"/>
<path d="M26 24.4 H49 V28 L28 27.4 Z" fill="#bcbab2"/>
<path d="M0 0 H13 L17 6 L22 12 L26 18 L27.4 24.4 L0 26 Z" fill="#15120a"/>
<path d="M3 4 Q9 3 13 9 Q15 14 10 15 Q4 14 3 4 Z" fill="#2e2414"/>
<path d="M0 24 L16 25 L30 32 L49 38 V49 H0 Z" fill="#4e4420"/>
<g fill="#56692e" opacity=".85"><ellipse cx="11" cy="29" rx="5" ry="4.4"/><ellipse cx="23" cy="35" rx="6" ry="3.6"/><ellipse cx="6" cy="38" rx="4" ry="3"/><ellipse cx="36" cy="40" rx="4" ry="2.4"/></g>
<path d="M30 42 Q40 41 49 43 V49 H28 Z" fill="#2a2414"/>
<path d="M0 44 Q10 42 20 46 L22 49 H0 Z" fill="#3a3218"/></g><g filter="url(#pb0)" opacity="0.8"><path d="M13 0 H49 V10 Q42 9 36 11 Q30 9 24 12.4 L22 12 L17 6 Z" fill="url(#sky4)"/></g></svg>
<svg class="abs" style="left:50.6px;top:104.7px" width="49.1" height="48.8" viewBox="0 0 49 49" preserveAspectRatio="none"><g filter="url(#pb)"><rect width="49" height="49" fill="#5a6c30"/>
<path d="M0 0 H49 V12 L40 15 L30 19 L18 21 L8 19 H0 Z" fill="#eeeef7"/>
<ellipse cx="44" cy="0" rx="14" ry="8" fill="#ccd4ee" opacity=".8"/>
<path d="M0 19 H8 L18 21 L30 19 L40 15 L49 12 V28 L0 30 Z" fill="#7c846e"/>
<path d="M0 19 H8 L13 20 L12 25 L0 26 Z" fill="#4c5442"/>
<path d="M14 23 L40 21.4 L41 25 L15 26.4 Z" fill="#a6a89e"/>
<path d="M40 15 L49 12 V20 L42 20 Z" fill="#5e6650"/>
<path d="M0 29 L20 27 L49 25.6 V49 H0 Z" fill="#566a2e"/>
<path d="M0 36 Q14 33 26 38 L28 49 H0 Z" fill="#6a3c34" opacity=".55"/>
<path d="M30 40 Q40 37 49 40 V49 H30 Z" fill="#46581f"/>
<g fill="#b02a62"><circle cx="5" cy="35" r="1.3"/><circle cx="9" cy="42" r="1.5"/><circle cx="17" cy="45" r="1.4"/><circle cx="36" cy="22" r="1"/><circle cx="44" cy="30" r="1.2"/><circle cx="30" cy="37" r="1.2"/><circle cx="40" cy="44" r="1.4"/><circle cx="23" cy="31" r="1"/><circle cx="46" cy="20" r="0.9"/></g>
<path d="M28 31.4 Q32 29 37 30.4 Q36 34.4 31.6 35 Q28.4 34.4 28 31.4 Z" fill="#f0eccc"/><circle cx="32.4" cy="33" r="1.2" fill="#e2c23a"/>
<path d="M0 2.6 L13.6 21.4 M0 8 L12.6 22.4" stroke="#5c5c68" stroke-width="0.45" fill="none"/></g><g filter="url(#pb0)" opacity="0.8"><defs><radialGradient id="sky5" cx="0.95" cy="0" r="0.6"><stop offset="0" stop-color="#c4cfee"/><stop offset="1" stop-color="#eeeef7"/></radialGradient></defs><path d="M0 0 H49 V12 L40 15 L30 19 L18 21 L8 19 H0 Z" fill="url(#sky5)"/><path d="M0 2.6 L13.6 21.4 M0 8 L12.6 22.4" stroke="#5c5c68" stroke-width="0.45" fill="none"/></g></svg>
<svg class="abs" style="left:101.1px;top:104.7px" width="48.8" height="48.8" viewBox="0 0 49 49" preserveAspectRatio="none"><g filter="url(#pb)"><rect width="49" height="49" fill="#86962f"/>
<g fill="#b7c450"><ellipse cx="5" cy="3" rx="5" ry="3.4"/><ellipse cx="20" cy="4" rx="7" ry="3" transform="rotate(15 20 4)"/><ellipse cx="39" cy="8" rx="7" ry="5" transform="rotate(-20 39 8)"/><ellipse cx="44" cy="27" rx="5" ry="7"/><ellipse cx="12" cy="15" rx="5" ry="3" transform="rotate(-30 12 15)"/><ellipse cx="33" cy="22" rx="4" ry="6" transform="rotate(20 33 22)"/><ellipse cx="10" cy="40" rx="7" ry="4" transform="rotate(25 10 40)"/><ellipse cx="30" cy="43" rx="8" ry="3.6" transform="rotate(-12 30 43)"/><ellipse cx="45" cy="44" rx="4" ry="3"/></g>
<g fill="#39461a"><ellipse cx="4" cy="24" rx="4.4" ry="5"/><ellipse cx="15" cy="28" rx="4.4" ry="5.4"/><ellipse cx="11" cy="7" rx="3" ry="2.4"/><ellipse cx="29" cy="10" rx="3" ry="3.4"/><ellipse cx="40" cy="18" rx="3.4" ry="2.4"/><ellipse cx="37" cy="34" rx="3" ry="3.4"/><ellipse cx="22" cy="38" rx="3.4" ry="2.6"/><ellipse cx="3" cy="46" rx="3.4" ry="2.6"/><ellipse cx="47" cy="36" rx="2" ry="3"/><ellipse cx="25" cy="47" rx="3" ry="2"/><ellipse cx="47" cy="2" rx="2" ry="2"/></g>
<g fill="#dbe28a"><ellipse cx="9" cy="2" rx="2.4" ry="1.6"/><ellipse cx="26" cy="17" rx="2.4" ry="1.6"/><ellipse cx="42" cy="5" rx="3" ry="2"/><ellipse cx="46" cy="22" rx="2" ry="3"/><ellipse cx="7" cy="33" rx="2.6" ry="1.6"/><ellipse cx="34" cy="40" rx="3" ry="1.6"/><ellipse cx="17" cy="44" rx="2.4" ry="1.4"/><ellipse cx="34" cy="14" rx="2" ry="1.4"/></g>
<path d="M20.6 17 Q27 19 27.4 27 Q25.6 33 21 34.4 Q19 26 20.6 17 Z" fill="#dcaa36"/></g><g filter="url(#pb0)" opacity="0.8"></g></svg>
<div class="abs" style="left:0;top:294.7px;width:150px;height:18.7px;background:#f6f6f7;border-top:0.6px solid #d8d8dc"></div>
<div class="abs" style="left:0;top:300.0px;width:150px;height:10px;line-height:10px;text-align:center;font-size:6.25px;font-weight:bold;color:#2a2a2c">Select Items</div>
<div class="abs" style="left:0;top:313.4px;width:150px;height:20px;background:#fff"></div>
</div>
<svg class="abs" style="left:107px;top:46.599999999999994px" width="90" height="13.4" viewBox="0 0 90 13.4"><path d="M0 0 H90 V0.7 H89.4 Q86.9 0.8 86.7 3.2 V6.6 Q86.5 12.8 80.3 13 H9.7 Q3.5 12.8 3.7 6.6 V3.2 Q3.5 0.8 0.6 0.7 H0 Z" fill="#1d1d1f"/></svg></div>
<div id="cbar"><svg class="abs" style="left:5.399999999999977px;top:3.3999999999999773px" width="8" height="8" viewBox="0 0 8 8"><g fill="none" stroke="#c9cace" stroke-width="0.7" stroke-linejoin="round"><path d="M4.6 0.6 L7.4 3.4 L6.4 3.8 L5.2 5 L5 6.6 L1.4 3 L3 2.8 L4.2 1.6 Z"/><path d="M3 5 L0.6 7.4"/></g></svg>
<svg class="abs" style="left:23px;top:4.0px" width="7" height="7" viewBox="0 0 7 7"><path d="M0.4 1 H6.6 M0.4 3.5 H6.6 M0.4 6 H6.6" stroke="#77787d" stroke-width="0.7"/></svg>
<svg class="abs" style="left:250.79999999999995px;top:3.1999999999999886px" width="8.4" height="8.4" viewBox="0 0 8.4 8.4"><circle cx="3.4" cy="3.4" r="2.9" fill="none" stroke="#c9cace" stroke-width="0.7"/><path d="M5.6 5.6 L8 8" stroke="#c9cace" stroke-width="0.85" stroke-linecap="round"/><path d="M2 3.4 H4.8" stroke="#c9cace" stroke-width="0.65"/></svg>
<span class="abs" style="left:261.79999999999995px;top:2.3999999999999773px;height:10px;line-height:10px;font-size:7.4px;color:#9b9ca1">64%</span>
<svg class="abs" style="left:289.20000000000005px;top:3.1999999999999886px" width="8.4" height="8.4" viewBox="0 0 8.4 8.4"><circle cx="3.4" cy="3.4" r="2.9" fill="none" stroke="#c9cace" stroke-width="0.7"/><path d="M5.6 5.6 L8 8" stroke="#c9cace" stroke-width="0.85" stroke-linecap="round"/><path d="M2 3.4 H4.8 M3.4 2 V4.8" stroke="#c9cace" stroke-width="0.65"/></svg></div>
<div id="dbg"><svg class="abs" style="left:4.400000000000006px;top:3.8000000000000114px" width="8" height="7.4" viewBox="0 0 8 7.4"><rect x="0.4" y="0.4" width="7.2" height="6.6" rx="0.9" fill="none" stroke="#7e7f85" stroke-width="0.7"/><path d="M0.4 4.8 H7.6" stroke="#7e7f85" stroke-width="0.7"/></svg>
<svg class="abs" style="left:22.19999999999999px;top:4.800000000000011px" width="8.8" height="5.6" viewBox="0 0 8.8 5.6"><path d="M0 0.6 Q0 0 0.6 0 L6.2 0 L8.8 2.8 L6.2 5.6 L0.6 5.6 Q0 5.6 0 5 Z" fill="#3473d8"/></svg>
<svg class="abs" style="left:42.599999999999994px;top:4px" width="4.6" height="7" viewBox="0 0 4.6 7"><path d="M0.8 0 V7 M3.8 0 V7" stroke="#7e7f85" stroke-width="1"/></svg>
<svg class="abs" style="left:59.19999999999999px;top:4.199999999999989px" width="8" height="7" viewBox="0 0 8 7"><path d="M0.6 4.6 L4 1.2 L7.4 4.6 Z" fill="none" stroke="#55565b" stroke-width="0.7" stroke-linejoin="round"/><path d="M0.4 6.4 H7.6" stroke="#55565b" stroke-width="0.7"/></svg>
<svg class="abs" style="left:77.80000000000001px;top:4px" width="6" height="7.2" viewBox="0 0 6 7.2"><path d="M3 0.2 V4.6 M1.2 3 L3 4.8 L4.8 3 M0.2 6.6 H5.8" fill="none" stroke="#55565b" stroke-width="0.7"/></svg>
<svg class="abs" style="left:95.6px;top:4px" width="6" height="7.2" viewBox="0 0 6 7.2"><path d="M3 4.8 V0.4 M1.2 2.2 L3 0.4 L4.8 2.2 M0.2 6.6 H5.8" fill="none" stroke="#55565b" stroke-width="0.7"/></svg>
<div class="abs" style="left:107.19999999999999px;top:3.3999999999999773px;width:0.7px;height:8.4px;background:#4b4c51"></div>
<svg class="abs" style="left:112.6px;top:3.8000000000000114px" width="7.8" height="7.6" viewBox="0 0 7.8 7.6"><rect x="0.4" y="0.8" width="7" height="6" rx="0.8" fill="none" stroke="#7e7f85" stroke-width="0.7"/><path d="M2.6 0.2 V7.4 M5.2 0.2 V7.4" stroke="#7e7f85" stroke-width="0.6"/></svg>
<svg class="abs" style="left:131.2px;top:3.8000000000000114px" width="7.8" height="7.6" viewBox="0 0 7.8 7.6"><g fill="none" stroke="#55565b" stroke-width="0.65"><circle cx="1.5" cy="1.6" r="1.1"/><circle cx="6.2" cy="3.8" r="1.1"/><circle cx="1.5" cy="6" r="1.1"/><path d="M2.6 1.6 H4 V6 H2.6 M4 3.8 H5.1"/></g></svg>
<svg class="abs" style="left:149.39999999999998px;top:3.6000000000000227px" width="7.2" height="8" viewBox="0 0 7.2 8"><g fill="none" stroke="#7e7f85" stroke-width="0.8"><path d="M5.6 1.4 Q3.6 0 2 1.4 Q1 2.8 2.4 3.8 H4.8 Q6.4 4.8 5.4 6.4 Q3.6 7.8 1.4 6.4"/><circle cx="3.6" cy="4" r="3.1" stroke-width="0.5"/></g></svg>
<svg class="abs" style="left:168.2px;top:4px" width="7" height="7" viewBox="0 0 7 7"><path d="M6.4 0.6 L3.8 6.4 L3.2 3.8 L0.6 3.2 Z" fill="none" stroke="#7e7f85" stroke-width="0.65" stroke-linejoin="round"/></svg>
<div class="abs" style="left:180.2px;top:3.3999999999999773px;width:0.7px;height:8.4px;background:#4b4c51"></div>
<svg class="abs" style="left:185px;top:3.3999999999999773px" width="8.4" height="8.4" viewBox="0 0 8.4 8.4"><rect x="0" y="0" width="8.4" height="8.4" rx="1.8" fill="#e9e9ec"/><path d="M2.1 0.6 V7.8 M4.2 0.6 V7.8 M6.3 0.6 V7.8 M0.6 2.1 H7.8 M0.6 4.2 H7.8 M0.6 6.3 H7.8" stroke="#b9b9c0" stroke-width="0.4"/></svg>
<span class="abs" style="left:196.2px;top:2.6000000000000227px;height:10px;line-height:10px;font-size:6.58px;color:#dcdde0">SwiftUIPHPickerApp</span></div>
</div>
</body></html>
